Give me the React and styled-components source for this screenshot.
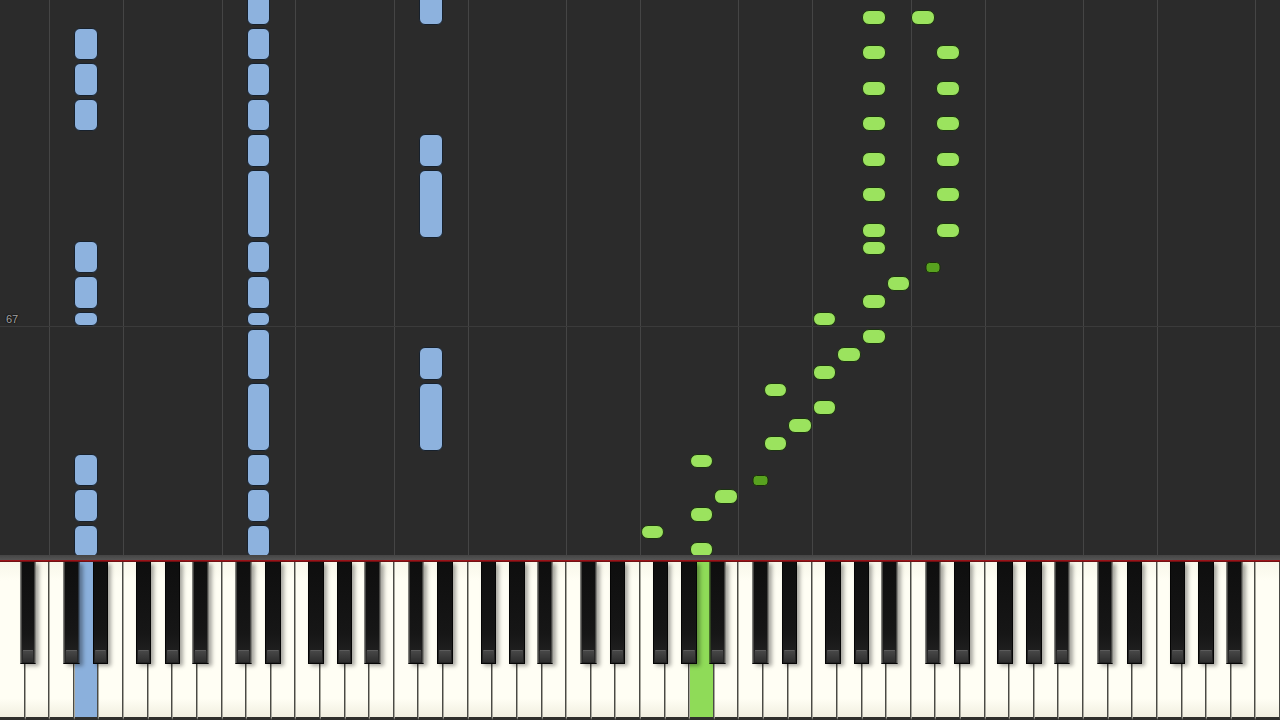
import React from 'react';
import styled, { createGlobalStyle } from 'styled-components';

const WHITE_COUNT = 52;
const UNIT = 17.75;
const ROWS = 32;
const BLACK_W = 15.5;

const LETTERS = ['A', 'B', 'C', 'D', 'E', 'F', 'G'];
// black key sits after these letters, nudged off the white-key boundary
const BLACK_OFFSET = { C: -2.5, D: 2, F: -4, G: 0, A: 3.5 };

const letterOf = (i) => LETTERS[i % 7];

const GlobalStyle = createGlobalStyle`
  html, body {
    margin: 0;
    padding: 0;
    background: #2b2b2b;
    overflow: hidden;
  }
`;

const Screen = styled.div`
  width: 1280px;
  height: 720px;
  display: flex;
  flex-direction: column;
  background: #2b2b2b;
  font-family: 'Liberation Sans', Arial, sans-serif;
`;

const Viewport = styled.div`
  height: 555px;
  flex: none;
  overflow: hidden;
  display: flex;
  flex-direction: column;
  justify-content: flex-end;
`;

const RollGrid = styled.div`
  flex: none;
  display: grid;
  grid-template-columns: repeat(${WHITE_COUNT}, 1fr);
  grid-template-rows: repeat(${ROWS}, ${UNIT}px);
  margin-bottom: -2px;
`;

const Lane = styled.div`
  grid-row: 1 / -1;
  grid-column: ${(p) => p.$col};
  border-left: ${(p) => (p.$edge ? '1px solid #454545' : 'none')};
`;

const BeatRow = styled.div`
  grid-column: 1 / -1;
  grid-row: ${(p) => p.$row};
  border-top: 1px solid #3b3b3b;
`;

const BeatLabel = styled.span`
  grid-column: 1 / span 2;
  grid-row: ${(p) => p.$row};
  align-self: end;
  padding: 0 0 1px 6px;
  font-size: 11px;
  line-height: 11px;
  color: #a6a6a6;
  text-shadow: 0 0 2px #000, 0 0 1px #000;
`;

const palette = {
  blue: { fill: '#8db2de', edge: '#17212d' },
  green: { fill: '#9be35e', edge: '#1c3310' },
  darkGreen: { fill: '#58a21f', edge: '#1a2e0c' },
};

const Note = styled.div`
  grid-column: ${(p) => p.$col};
  grid-row: ${(p) => p.$row};
  margin: 3px 0.5px 0;
  box-sizing: border-box;
  background: ${(p) => palette[p.$tone].fill};
  border: 1.5px solid ${(p) => palette[p.$tone].edge};
  border-radius: ${(p) => (p.$tone === 'blue' ? 6 : 7)}px;
`;

const ShortNote = styled(Note)`
  justify-self: center;
  align-self: end;
  margin: 0;
  width: ${BLACK_W}px;
  height: 11px;
  border-radius: 4px;
`;

const Divider = styled.div`
  height: 5px;
  flex: none;
  background: linear-gradient(#444444, #555555);
`;

const RedLine = styled.div`
  height: 2px;
  flex: none;
  background: linear-gradient(#b3151d, #5a1010);
`;

const Keyboard = styled.div`
  flex: 1;
  display: grid;
  grid-template-columns: repeat(${WHITE_COUNT}, 1fr);
  grid-template-rows: 102px 1fr;
  background: #2a2a2a;
`;

const keyFill = {
  blue: '#8bb0dc',
  green: '#8fdb58',
};

const WhiteKey = styled.div`
  grid-column: ${(p) => p.$col};
  grid-row: 1 / -1;
  box-sizing: border-box;
  background: ${(p) => (p.$lit ? keyFill[p.$lit] : 'linear-gradient(#f8f7ea, #fffef4 12%, #fffef4 88%, #f1efe0)')};
  border-right: 1px solid #4a4a45;
  border-left: ${(p) => (p.$col === 1 ? 'none' : '1px solid #a9a89e')};
  border-bottom: 3px solid #2f2f2c;
`;

const BlackKey = styled.div`
  grid-column: ${(p) => p.$col} / span 2;
  grid-row: 1;
  justify-self: center;
  position: relative;
  width: ${BLACK_W}px;
  box-sizing: border-box;
  border: 1px solid #050505;
  border-top: none;
  background: linear-gradient(#0e0e0e, #161616 70%, #242424);
  box-shadow: 3px 2px 4px rgba(0, 0, 0, 0.35);
  &::after {
    content: '';
    position: absolute;
    left: 1px;
    right: 1px;
    bottom: 1px;
    height: 11px;
    border-top: 1px solid #5c5c5c;
    background: linear-gradient(#474747, #2e2e2e);
    border-radius: 1px;
  }
`;

// rows counted from the top; t is time units above the keyboard
const rowSpan = (t, len) => `${ROWS - t - len + 1} / span ${len}`;

// [whiteIndex, startUnit, lengthUnits]
const blueNotes = [
  ...[[0, 2], [2, 2], [4, 2], [13, 1], [14, 2], [16, 2], [24, 2], [26, 2], [28, 2]].map(([t, l]) => [3, t, l]),
  ...[[0, 2], [2, 2], [4, 2], [6, 4], [10, 3], [13, 1], [14, 2], [16, 2], [18, 4], [22, 2], [24, 2], [26, 2], [28, 2], [30, 2]].map(([t, l]) => [10, t, l]),
  ...[[6, 4], [10, 2], [18, 4], [22, 2], [30, 2]].map(([t, l]) => [17, t, l]),
];

const greenNotes = [
  [28, 0], [26, 1], [28, 2], [29, 3], [28, 5],
  [31, 6], [32, 7], [33, 8], [31, 9], [33, 10],
  [34, 11], [35, 12], [33, 13], [35, 14], [36, 15],
  [35, 17], [35, 18], [38, 18],
  [35, 20], [38, 20], [35, 22], [38, 22], [35, 24], [38, 24],
  [35, 26], [38, 26], [35, 28], [38, 28], [35, 30], [37, 30],
];

// black-key notes, by the white key to their left
const darkNotes = [
  [30, 4],
  [37, 16],
];

const lanes = Array.from({ length: WHITE_COUNT }, (_, i) => ({
  col: i + 1,
  edge: i > 0 && (letterOf(i) === 'C' || letterOf(i) === 'F'),
}));

const blackKeys = [];
for (let i = 0; i < WHITE_COUNT - 1; i += 1) {
  if (BLACK_OFFSET[letterOf(i)] !== undefined) blackKeys.push(i);
}

const litKeys = { 3: 'blue', 28: 'green' };

const App = () => (
  <Screen>
    <GlobalStyle />
    <Viewport>
      <RollGrid>
        {lanes.map((l) => (
          <Lane key={l.col} $col={l.col} $edge={l.edge} />
        ))}
        <BeatRow $row={ROWS - 12} />
        <BeatLabel $row={ROWS - 13}>67</BeatLabel>

        {blueNotes.map(([k, t, l]) => (
          <Note key={`b${k}-${t}`} $tone="blue" $col={k + 1} $row={rowSpan(t, l)} />
        ))}
        {greenNotes.map(([k, t]) => (
          <Note key={`g${k}-${t}`} $tone="green" $col={k + 1} $row={rowSpan(t, 1)} />
        ))}
        {darkNotes.map(([k, t]) => (
          <ShortNote
            key={`d${k}-${t}`}
            $tone="darkGreen"
            $col={`${k + 1} / span 2`}
            $row={rowSpan(t, 1)}
            style={{ translate: `${BLACK_OFFSET[letterOf(k)]}px 0` }}
          />
        ))}
      </RollGrid>
    </Viewport>
    <Divider />
    <RedLine />
    <Keyboard>
      {lanes.map((l) => (
        <WhiteKey key={l.col} $col={l.col} $lit={litKeys[l.col - 1]} />
      ))}
      {blackKeys.map((i) => (
        <BlackKey
          key={i}
          $col={i + 1}
          style={{ translate: `${BLACK_OFFSET[letterOf(i)]}px 0` }}
        />
      ))}
    </Keyboard>
  </Screen>
);

export default App;
